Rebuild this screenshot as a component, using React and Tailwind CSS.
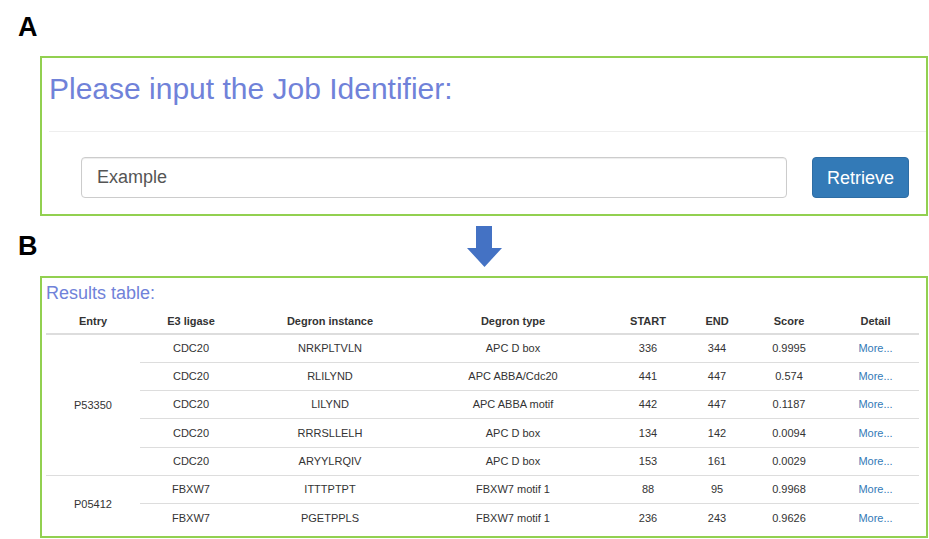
import React from 'react';

const results = [
  { entry: 'P53350', span: 5, ligase: 'CDC20', instance: 'NRKPLTVLN', type: 'APC D box', start: 336, end: 344, score: '0.9995' },
  { ligase: 'CDC20', instance: 'RLILYND', type: 'APC ABBA/Cdc20', start: 441, end: 447, score: '0.574' },
  { ligase: 'CDC20', instance: 'LILYND', type: 'APC ABBA motif', start: 442, end: 447, score: '0.1187' },
  { ligase: 'CDC20', instance: 'RRRSLLELH', type: 'APC D box', start: 134, end: 142, score: '0.0094' },
  { ligase: 'CDC20', instance: 'ARYYLRQIV', type: 'APC D box', start: 153, end: 161, score: '0.0029', groupEnd: true },
  { entry: 'P05412', span: 2, ligase: 'FBXW7', instance: 'ITTTPTPT', type: 'FBXW7 motif 1', start: 88, end: 95, score: '0.9968' },
  { ligase: 'FBXW7', instance: 'PGETPPLS', type: 'FBXW7 motif 1', start: 236, end: 243, score: '0.9626', last: true },
];

const headers = ['Entry', 'E3 ligase', 'Degron instance', 'Degron type', 'START', 'END', 'Score', 'Detail'];
const widths = [94, 102, 176, 190, 80, 58, 86, 87];

const DownArrow = () => (
  <svg width="35" height="41" viewBox="0 0 35 41">
    <polygon points="9,0 25,0 25,22 35,22 17.5,41 0,22 9,22" fill="#4472c4" />
  </svg>
);

const JobBox = () => (
  <div className="ml-[40px] w-[888px] h-[160px] border-2 border-[#92d050] pt-[16px]">
    <h1 className="pl-[7px] text-[30px] leading-none font-normal text-[#7082d9]">
      Please input the Job Identifier:
    </h1>
    <div className="mt-[27px] ml-[7px] h-px bg-[#eeeeee]" />
    <div className="mt-[25px] pl-[39px] flex gap-[25px]">
      <div className="w-[706px] h-[41px] border border-[#cccccc] rounded-[4px] shadow-[inset_0_1px_1px_rgba(0,0,0,0.075)] flex items-center pl-[15px] text-[18px] text-[#555555]">
        Example
      </div>
      <button className="w-[97px] h-[41px] rounded-[4px] bg-[#337ab7] border border-[#2e6da4] text-white text-[18px] leading-none">
        Retrieve
      </button>
    </div>
  </div>
);

const ResultsBox = () => (
  <div className="ml-[40px] w-[888px] h-[262px] overflow-hidden border-2 border-[#92d050] pt-[6px] pl-[4px]">
    <h2 className="text-[18px] leading-none font-normal text-[#7082d9]">Results table:</h2>
    <table className="table-fixed border-collapse w-[873px] text-[11px] text-[#333333]">
      <colgroup>
        {widths.map((w, i) => (
          <col key={i} style={{ width: w }} />
        ))}
      </colgroup>
      <thead>
        <tr>
          {headers.map(h => (
            <th key={h} className="pt-[12px] pb-[4px] leading-[15px] font-bold text-center border-b-2 border-[#dddddd]">
              {h}
            </th>
          ))}
        </tr>
      </thead>
      <tbody>
        {results.map((r, i) => {
          const cell = `h-[28.3px] p-0 text-center align-middle ${r.last ? '' : 'border-b border-[#dddddd]'}`;
          return (
            <tr key={i}>
              {r.entry && (
                <td rowSpan={r.span} className={`p-0 text-center align-middle ${r.span === 2 ? '' : 'border-b border-[#dddddd]'}`}>
                  {r.entry}
                </td>
              )}
              <td className={cell}>{r.ligase}</td>
              <td className={cell}>{r.instance}</td>
              <td className={cell}>{r.type}</td>
              <td className={cell}>{r.start}</td>
              <td className={cell}>{r.end}</td>
              <td className={cell}>{r.score}</td>
              <td className={`${cell} text-[#337ab7]`}>More...</td>
            </tr>
          );
        })}
      </tbody>
    </table>
  </div>
);

export default function App() {
  return (
    <div className="w-[929px] h-[539px] overflow-hidden bg-white font-['Liberation_Sans',Arial,sans-serif]">
      <div className="h-[56px] pl-[18px] pt-[14px]">
        <span className="block text-[27px] leading-none font-bold text-black">A</span>
      </div>
      <JobBox />
      <div className="h-[60px] flex items-start">
        <div className="w-[467px] pl-[18px] pt-[17px] text-[27px] leading-none font-bold text-black">B</div>
        <div className="pt-[10px]">
          <DownArrow />
        </div>
      </div>
      <ResultsBox />
    </div>
  );
}
